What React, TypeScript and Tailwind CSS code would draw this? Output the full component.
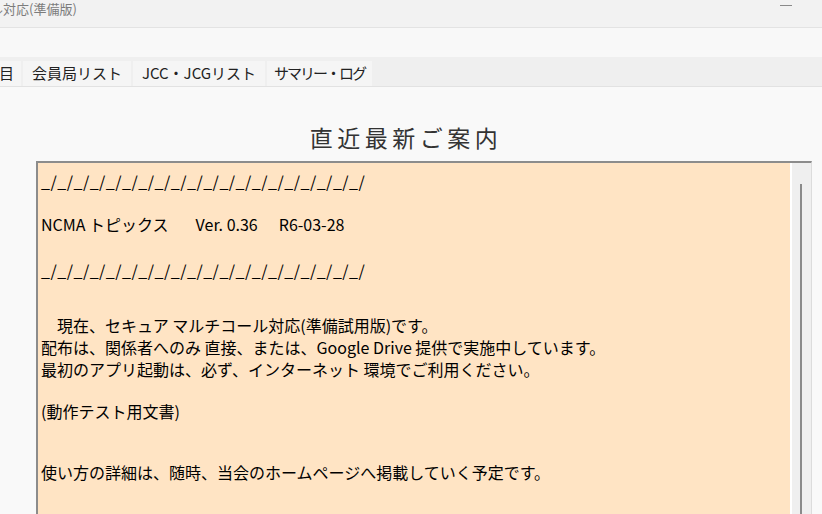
const slashes = '_/'.repeat(20)

const tabs = [
  { label: '会員局リスト', w: 'w-[108px]', extra: '' },
  { label: 'JCC・JCGリスト', w: 'w-[132px]', extra: '' },
  { label: 'サマリー・ログ', w: 'w-[105px]', extra: 'tracking-[-2px]' },
]

function Line({ children }: { children?: React.ReactNode }) {
  return <div className="h-[22px] leading-[22px] whitespace-pre">{children}</div>
}

export default function App() {
  return (
    <div className="w-[822px] h-[514px] overflow-hidden flex flex-col bg-[#f9f9f9] font-['Noto_Sans_CJK_JP',sans-serif]">
      {/* title bar */}
      <div className="h-[28px] shrink-0 flex justify-between bg-[#f2f2f2] border-b border-[#e3e3e3] overflow-hidden">
        <span className="ml-[-10px] mt-[1px] text-[13px] leading-[16px] text-[#7c7c7c]">ル対応(準備版)</span>
        <div className="mr-[30px] mt-[5px] w-[12px] h-px bg-[#8a8a8a]" />
      </div>

      {/* toolbar band */}
      <div className="h-[29px] shrink-0 bg-[#f8f8f8]" />

      {/* tabs */}
      <div className="h-[30px] shrink-0 flex items-end gap-[2px] bg-[#efefef] border-b border-[#e2e2e2] text-[15px] text-[#222]">
        <div className="w-[21px] h-[25px] bg-[#f5f5f5] overflow-hidden flex justify-end items-center pr-[7px]">
          <span className="whitespace-nowrap">項目</span>
        </div>
        {tabs.map((t) => (
          <div key={t.label} className={`${t.w} ${t.extra} h-[25px] bg-[#f5f5f5] flex items-center justify-center whitespace-nowrap`}>
            {t.label}
          </div>
        ))}
      </div>

      {/* content */}
      <div className="flex-1 flex flex-col min-h-0">
        <h2 className="mt-[35px] mb-[9px] pr-[10px] h-[30px] leading-[30px] text-center text-[23px] tracking-[4.5px] font-normal text-[#333]">
          直近最新ご案内
        </h2>

        <div className="flex-1 flex ml-[36px] w-[776px] border-t-2 border-l-2 border-[#8c8c8c] border-r border-r-[#dcdcdc]">
          <div className="flex-1 bg-[#ffe4c4] pl-[3px] pt-[7px] text-[16px] text-black">
            <Line><span className="tracking-[0.5px]">{slashes}</span></Line>
            <div className="h-[21px]" />
            <Line>
              NCMA トピックス<span className="ml-[27px]">Ver. 0.36</span>
              <span className="ml-[21px]">R6-03-28</span>
            </Line>
            <div className="h-[24px]" />
            <Line><span className="tracking-[0.5px]">{slashes}</span></Line>
            <div className="h-[33px]" />
            <Line>　現在、セキュア マルチコール対応(準備試用版)です。</Line>
            <Line>配布は、関係者へのみ 直接、または、Google Drive 提供で実施中しています。</Line>
            <Line>最初のアプリ起動は、必ず、インターネット 環境でご利用ください。</Line>
            <div className="h-[20px]" />
            <Line>(動作テスト用文書)</Line>
            <div className="h-[39px]" />
            <Line>使い方の詳細は、随時、当会のホームページへ掲載していく予定です。</Line>
          </div>
          <div className="w-[2px] bg-white" />
          <div className="w-[19px] bg-[#efefef] pl-[8px] pt-[21px]">
            <div className="w-[2px] h-full bg-[#8a8a8a]" />
          </div>
        </div>
      </div>
    </div>
  )
}
